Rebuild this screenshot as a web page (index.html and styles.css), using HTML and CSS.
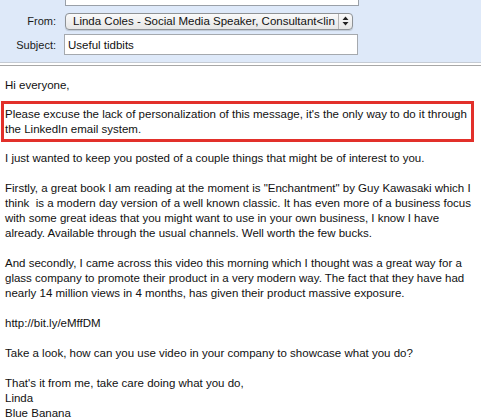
FILE: index.html
```html
<!DOCTYPE html>
<html>
<head>
<meta charset="utf-8">
<link rel="stylesheet" href="styles.css">
</head>
<body>
<div class="compose">
  <div class="header">
    <div class="to-field"></div>
    <div class="row from-row">
      <span class="label">From:</span>
      <div class="select">
        <span class="select-text">Linda Coles - Social Media Speaker, Consultant&lt;lin</span>
        <span class="arrows"><svg width="7" height="10" viewBox="0 0 7 10"><path d="M3.5 0.5 L6.5 4 H0.5 Z M3.5 9.5 L6.5 6 H0.5 Z" fill="#222"/></svg></span>
      </div>
    </div>
    <div class="row subject-row">
      <span class="label">Subject:</span>
      <div class="input">Useful tidbits</div>
    </div>
  </div>
  <div class="sep"></div>
  <div class="message">
    <p class="greeting">Hi everyone,</p>
    <p class="highlight">Please excuse the lack of personalization of this message, it's the only way to do it through the LinkedIn email system.</p>
    <p>I just wanted to keep you posted of a couple things that might be of interest to you.</p>
    <p>Firstly, a great book I am reading at the moment is "Enchantment" by Guy Kawasaki which I think &nbsp;is a modern day version of a well known classic. It has even more of a business focus with some great ideas that you might want to use in your own business, I know I have already. Available through the usual channels. Well worth the few bucks.</p>
    <p>And secondly, I came across this video this morning which I thought was a great way for a glass company to promote their product in a very modern way. The fact that they have had nearly 14 million views in 4 months, has given their product massive exposure.</p>
    <p>http://bit.ly/eMffDM</p>
    <p>Take a look, how can you use video in your company to showcase what you do?</p>
    <p>That's it from me, take care doing what you do,<br>Linda<br>Blue Banana</p>
  </div>
</div>
</body>
</html>
```
FILE: styles.css
```css
html, body {
  margin: 0;
  padding: 0;
  background: #fff;
}
body {
  font-family: "Liberation Sans", Arial, sans-serif;
  font-size: 11.5px;
  color: #111;
  overflow: hidden;
}
.header {
  background: #dee9f9;
  height: 62px;
  border-bottom: 1px solid #c5cbd3;
  display: flex;
  flex-direction: column;
}
.to-field {
  margin-left: 65px;
  width: 292px;
  height: 5px;
  background: #fff;
  border: 1px solid #9aa0a8;
  border-top: none;
}
.row {
  display: flex;
  align-items: center;
}
.label {
  width: 56px;
  text-align: right;
  font-size: 11px;
  color: #1a1a1a;
}
.from-row {
  margin-top: 6px;
  height: 18px;
}
.select {
  margin-left: 9px;
  width: 288px;
  height: 17px;
  box-sizing: border-box;
  border: 1px solid #8e9296;
  border-radius: 4px;
  background: linear-gradient(#fafafa, #e6e6e6);
  display: flex;
  align-items: center;
  overflow: hidden;
  box-shadow: 0 1px 1px rgba(0,0,0,0.15);
}
.select-text {
  flex: 1;
  padding-left: 7px;
  white-space: nowrap;
  overflow: hidden;
  font-size: 11.5px;
}
.arrows {
  width: 13px;
  height: 100%;
  border-left: 1px solid #b5b5b5;
  display: flex;
  align-items: center;
  justify-content: center;
}
.subject-row {
  margin-top: 4px;
  height: 21px;
}
.input {
  margin-left: 8px;
  width: 294px;
  height: 21px;
  box-sizing: border-box;
  border: 1px solid #a5a9ae;
  background: #fff;
  padding: 4px 0 0 3px;
  font-size: 11.5px;
}
.sep {
  height: 2px;
  background: #fff;
  border-bottom: 1px solid #a8a8a8;
}
.message {
  padding: 12px 4px 0 5px;
  line-height: 15px;
}
.message p {
  margin: 0 0 15px 0;
}
.message .greeting {
  margin-bottom: 8px;
}
.message .highlight {
  margin: 0 3px 9px -4px;
  padding: 3px 0 2px 1px;
  border: 3px solid #e2302a;
}
```
